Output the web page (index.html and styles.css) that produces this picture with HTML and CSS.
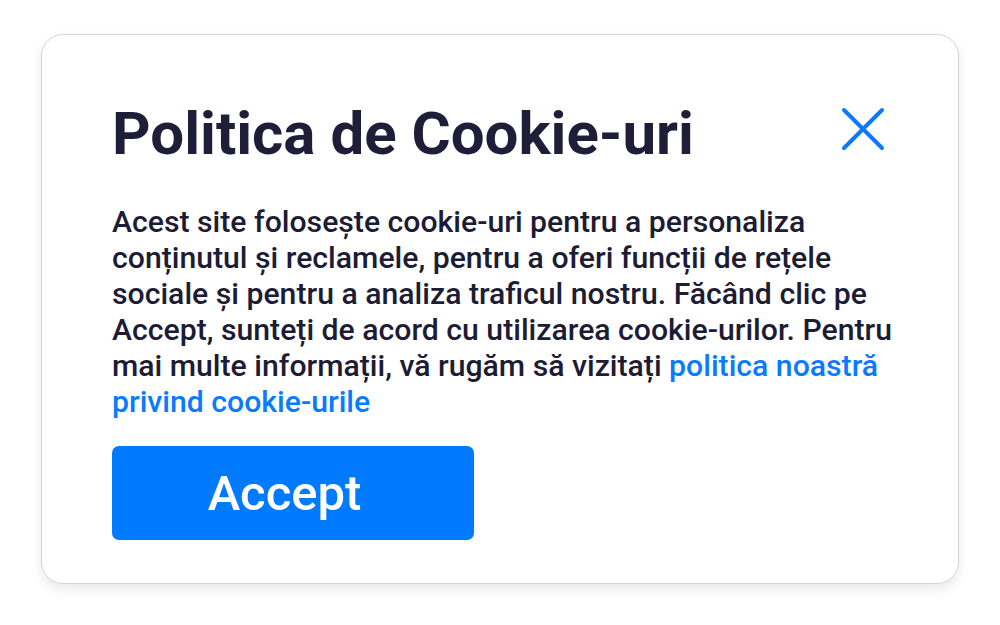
FILE: index.html
```html
<!doctype html>
<html>
<head>
  <meta charset="utf-8">
  <link rel="stylesheet" href="styles.css">
</head>
<body>
  <div class="card">
    <div class="head">
      <h1 class="title">Politica de Cookie-uri</h1>
      <button class="close" aria-label="Închide">
        <svg width="44" height="44" viewBox="0 0 44 44">
          <path d="M3 3 L41 41 M41 3 L3 41" stroke="#0a7aff" stroke-width="4" stroke-linecap="round" fill="none"/>
        </svg>
      </button>
    </div>
    <p class="text">Acest site folosește cookie-uri pentru a personaliza conținutul și reclamele, pentru a oferi funcții de rețele sociale și pentru a analiza traficul nostru. Făcând clic pe Accept, sunteți de acord cu utilizarea cookie-urilor. Pentru mai multe informații, vă rugăm să vizitați <a href="#" class="link">politica noastră privind cookie-urile</a></p>
    <button class="accept">Accept</button>
  </div>
</body>
</html>
```

FILE: styles.css
```css
body{
  margin: 0;
  padding: 34px 41px;
  background: #ffffff;
  font-family: Roboto, "Noto Sans", sans-serif;
}
.card{
  height: 550px;
  box-sizing: border-box;
  background: #ffffff;
  border: 1px solid #d4d4d4;
  border-radius: 22px;
  box-shadow: 0 5px 12px rgba(0,0,0,0.09);
  padding: 61px 58px 0 70px;
}
.head{
  display: flex;
  justify-content: space-between;
  align-items: flex-start;
}
.title{
  margin: 0;
  font-size: 60px;
  font-weight: 700;
  line-height: 76px;
  color: #1e1e38;
}
.close{
  border: none;
  background: none;
  padding: 0;
  margin-top: 11px;
  margin-right: 15px;
  cursor: pointer;
}
.text{
  margin: 32px 0 0 0;
  font-size: 30.2px;
  font-weight: 500;
  line-height: 36px;
  color: #1c1c35;
}
.link{
  color: #0a7aff;
  text-decoration: none;
}
.accept{
  margin-top: 26px;
  width: 362px;
  height: 94px;
  padding: 0 17px 0 0;
  border: none;
  border-radius: 7px;
  background: #007bff;
  color: #ffffff;
  font-family: Roboto, "Noto Sans", sans-serif;
  font-size: 49px;
  font-weight: 500;
  cursor: pointer;
}
```
